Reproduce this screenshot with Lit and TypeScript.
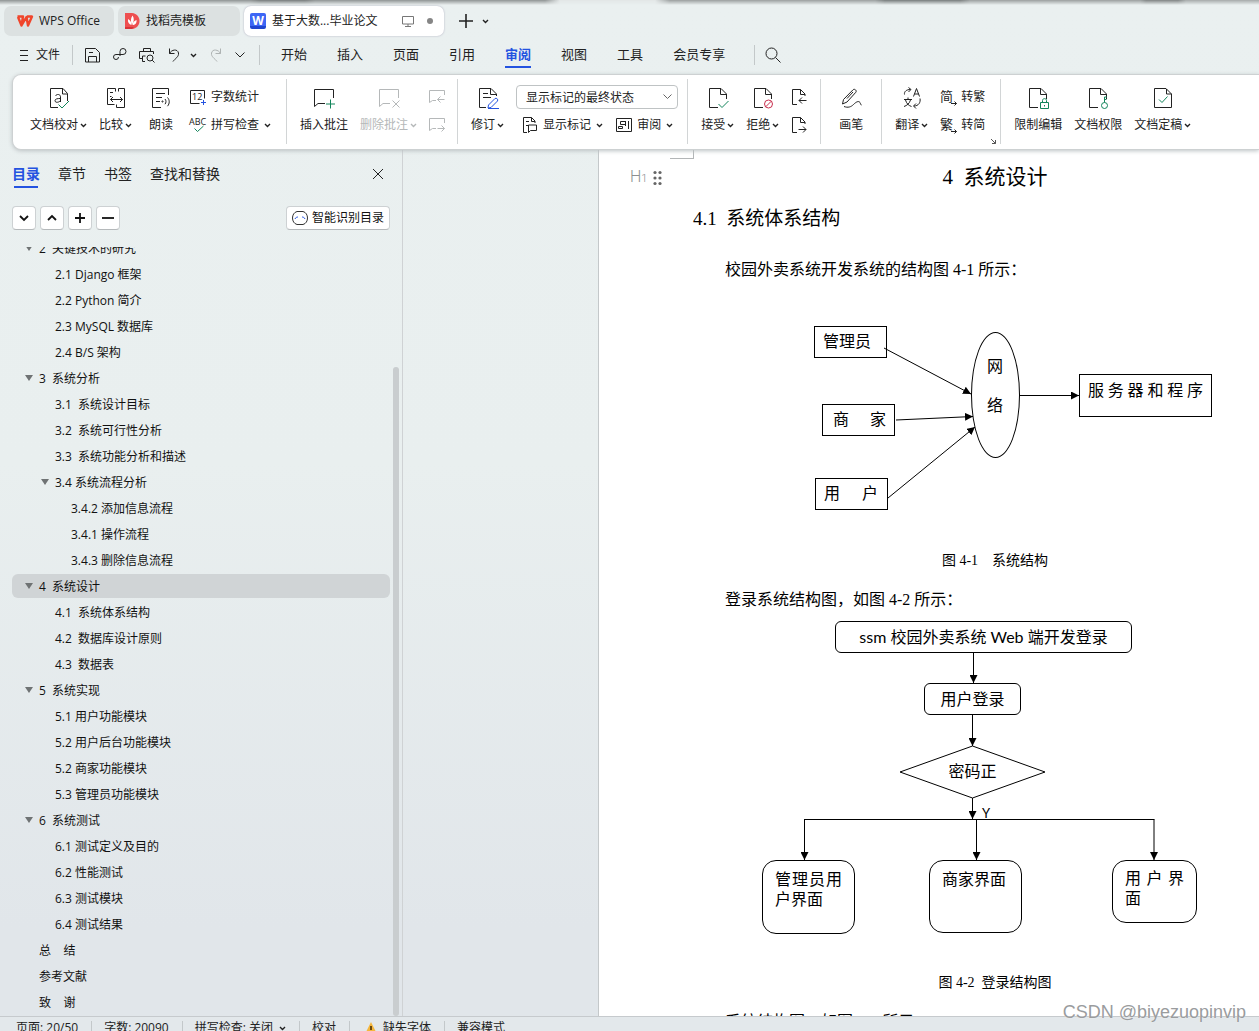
import { LitElement, html, svg, css, nothing } from "lit";
import { customElement, property, state } from "lit/decorators.js";
import { classMap } from "lit/directives/class-map.js";

const GREEN = "#12855b";
const BLUE = "#2453e0";

/* Line icons, drawn in a 24 x 24 box at their real size. */
const docSheet = svg`<path d="M12 21.5H3.5v-19H15l5.5 5.5v5"/><path d="M14.5 2.5v6h6"/>`;
const big: Record<string, unknown> = {
  proof: svg`<path d="M11 21.5H3.5v-19H16l4.500 5V15"/><path d="M15.500 2.500v5.500h5"/><path d="M8.500 10c1-2.300 5-2 5 .8V16M13.500 12.500c-3 0-5.500.3-5.500 2.200 0 2.300 4 2 5.500-.2"/><path stroke=${GREEN} d="M11.500 18.500l3.500 3.500 7-7"/>`,
  compare: svg`<path d="M10.500 18.500h-7v-16h8v3M14.500 5.500v-3h6v16M20.500 18v3.500h-8v-3"/><path d="M6 6.500h3M6 10.500h1.500M6.500 13.500h12M9 11l-2.500 2.500L9 16M16 11l2.500 2.500L16 16"/>`,
  read: svg`<path d="M12 21.500H3.500v-19h16V9"/><path d="M7 7.500h9M7 11.500h6M7 15.500h4"/><circle cx="13.500" cy="15.500" r=".6"/><path d="M16 13c1.300 1.600 1.300 3.600 0 5.200M18.500 11.500c2.300 2.500 2.300 6 0 8.700"/>`,
  addNote: svg`<path d="M21.500 12V3.500h-19v17l3.500-3h7"/><path stroke=${GREEN} d="M18.500 13.500v9M14 18h9"/>`,
  delNote: svg`<path d="M21.500 12V3.500h-19v17l3.500-3h7"/><path d="M15.500 14.500l7 7M22.500 14.500l-7 7"/>`,
  revise: svg`<path d="M10 21.500H3.500v-19H15l5.500 5.500v2"/><path d="M14.500 2.500v6h6M7 7.500h5M7 11.500h8"/><path stroke=${BLUE} d="M12.500 19l6.500-6.500c1.500-1 3.500 1 2.500 2.500L15 21.500l-3 .5zM12 22.500h11"/>`,
  accept: svg`${docSheet}<path stroke=${GREEN} d="M12.500 18l3.500 3.500 6.500-6.500"/>`,
  reject: svg`${docSheet}<circle stroke="#c9304f" cx="17.500" cy="18" r="4"/><path stroke="#c9304f" d="M14.700 20.800l5.600-5.600"/>`,
  pen: svg`<path d="M3.500 18l1-4.500L14 3.800c1.500-1.500 4.200.8 2.800 2.500L8 16zM14 6l-6 6.500"/><path d="M5 20.500c4 1.500 7 .5 9.500-2s5-4 6.500-2c.6 1 .5 2.500 1.500 2.500"/>`,
  translate: svg`<path d="M4.500 8.500c-.5-3 2-5 6-5M8.500 1.500l2.500 2-2.500 2.500M20 12.500c.8 4-1.500 7.500-6 7.500M16 17.500l-2.500 2.500 2.500 2.500"/><path d="M13.500 10.500l3-8 3 8M14.500 8h4"/><path d="M4 13.500h8M8 11.500v2M5.500 14c1 3.500 3 5.500 6 6.500M10.500 14c-1 3.500-3.500 5.500-6.500 6.500"/>`,
  limit: svg`${docSheet}<path stroke=${GREEN} d="M14.500 16.500h8v6h-8zM16.500 16.500v-2c0-2.500 4-2.500 4 0v2M18.500 19v1.500"/>`,
  rights: svg`${docSheet}<circle stroke=${GREEN} cx="18.500" cy="19.500" r="3"/><path stroke=${GREEN} d="M18.500 16.500v-5.500h2.500M18.500 13.500h2"/>`,
  final: svg`<path d="M3.500 2.500H15l5.500 5.500v13.500h-17z"/><path d="M15.500 3v5h5"/><path stroke=${GREEN} d="M8 13.500l3 3 5.500-6"/>`,
};

/* Small icons, drawn in a 16 x 16 box. */
const small: Record<string, unknown> = {
  count: svg`<path d="M9.500 14.500h-9v-13h14v8"/><text x="2" y="11" font-size="9" fill="#222" stroke="none">12</text><path stroke=${BLUE} d="M13.500 11v5M11 13.500h5"/>`,
  spell: svg`<text x="-1" y="8" font-size="9" fill="#222" stroke="none">ABC</text><path stroke=${GREEN} d="M4.500 11.500l3 3 6-5.500"/>`,
  prevNote: svg`<path d="M15.500 6V1.500H.5v12l3-2H7"/><path d="M15.500 10.500H8.500M11.500 7.500l-3 3 3 3"/>`,
  nextNote: svg`<path d="M15.500 6V1.500H.5v12l3-2H7"/><path d="M8.500 11.500h7M12.500 8.500l3 3-3 3"/>`,
  marks: svg`<path d="M5 15.500H1.500V.5h8l3.500 3.500v2M9.500.5v4h3.500M4 4.500h3M4 8.500h2"/><path d="M6.500 15.500v-7.500h8v5.500H8.500z"/>`,
  pane: svg`<path d="M.5 1.500h15v13H.5zM12.500 4v8M9.500 4.500h-5v3h5zM9.500 4v5M2.500 9.500h4v2h-4z"/>`,
  prevRev: svg`<path d="M6 15.500H1.500V.5h8l4.500 4.500v2M9.500.5v5H14"/><path d="M15.500 11.500H8M11 8.500l-3 3 3 3"/>`,
  nextRev: svg`<path d="M6 15.500H1.500V.5h8l4.500 4.500v2M9.500.5v5H14"/><path d="M7.500 12.500H15M12 9.500l3 3-3 3"/>`,
  toTrad: svg`<text x="0" y="12" font-size="13" fill="#222" stroke="none">简</text><path d="M11 14.500h5.500M14.500 12.500l2 2-2 2"/>`,
  toSimp: svg`<text x="0" y="12" font-size="13" fill="#222" stroke="none">繁</text><path d="M11 14.500h5.500M14.500 12.500l2 2-2 2"/>`,
  save: svg`<path d="M.5 1.500h10l4 4v9.500H.5zM3.500 15V9.500h8V15M4 5.500h4"/>`,
  share: svg`<path d="M8 9V4.500a3 3 0 1 1 3 3H4a2.500 2.500 0 1 0 2.500 2.500"/>`,
  print: svg`<path d="M4.500 4.500v-3h7v3M3 11.500H.5v-7h14V7M6 14.500H3.500V9h3"/><circle cx="11" cy="11" r="3"/><path d="M13.200 13.200l2.300 2.300"/>`,
  undo: svg`<path d="M3.500 1.500v5h5M3.500 6.500c2-4 8-5 9-.5.500 4-3.500 5.500-5.500 8.500"/>`,
  redo: svg`<path d="M12.500 1.500v5h-5M12.500 6.500c-2-4-8-5-9-.5-.500 4 3.500 5.500 5.500 8.500"/>`,
  search: svg`<circle cx="6.500" cy="6.500" r="5.500"/><path d="M10.500 10.500l5 5"/>`,
  screen: svg`<path d="M2.500 3.500h11v7.500h-11zM8 11v2.500M5 13.500h6"/>`,
  plus: svg`<path stroke-width="1.600" d="M8 1v14M1 8h14"/>`,
  menu: svg`<path d="M4 3.500h8M4 8.500h8M4 13.500h8"/>`,
};

const bigIcon = (n: string) => html`<svg class="i24" viewBox="0 0 24 24" aria-hidden="true">${big[n]}</svg>`;
const icon = (n: string) => html`<svg class="i16" viewBox="0 0 16 16" aria-hidden="true">${small[n]}</svg>`;
const chev = html`<svg class="chev" viewBox="0 0 7 5" aria-hidden="true"><path d="M1 1l2.500 2.500L6 1"/></svg>`;

const shared = css`
  * { box-sizing: border-box; }
  button, select {
    font: inherit;
    color: inherit;
    background: none;
    border: 0;
    margin: 0;
    padding: 0;
    white-space: nowrap;
  }
  svg { flex: none; display: block; overflow: visible; fill: none; stroke: currentColor; }
  .i24 { width: 24px; height: 24px; }
  .i16 { width: 16px; height: 16px; }
  .chev { width: 7px; height: 5px; stroke-width: 1.4; }
`;

@customElement("title-tabs")
class TitleTabs extends LitElement {
  static styles = [shared, css`
    :host { display: block; position: relative; }
    .edge {
      position: absolute;
      inset: 0 0 auto 0;
      height: 5px;
      background: linear-gradient(90deg, #8f9393 0 250px, #777b7b 260px 305px, #8f9393 315px 545px, #e2e6e6 560px 655px, #9b9f9f 670px 875px, #777b7b 885px 960px, #9b9f9f 970px 1140px, #7f8383 1146px 1178px, #a6aaaa 1186px);
      -webkit-mask-image: linear-gradient(#000, transparent);
      mask-image: linear-gradient(#000, transparent);
    }
    .tabs { display: flex; align-items: center; gap: 4px; padding: 6px 4px 0; }
    .tab {
      display: flex;
      align-items: center;
      gap: 6px;
      height: 30px;
      padding: 0 14px 0 13px;
      border-radius: 7px;
      background: #dce1e1;
    }
    .second { padding: 0 34px 0 6px; }
    .active { background: #fff; padding: 0 6px; box-shadow: 0 0 2px #aab; }
    .badge {
      width: 16px;
      height: 16px;
      line-height: 15px;
      border-radius: 2px;
      background: linear-gradient(#3d66f5 13px, #1f45cf 13px);
      color: #fff;
      font-weight: 700;
      text-align: center;
    }
    .state { display: flex; align-items: center; gap: 11px; color: #777; padding-left: 17px; }
    .dot { width: 6px; height: 6px; border-radius: 50%; background: #858585; margin-right: 5px; }
    .new { display: flex; align-items: center; gap: 8px; padding-left: 10px; }
  `];
  render() {
    return html`
      <div class="edge"></div>
      <div class="tabs">
        <button class="tab">
          <svg class="i16" viewBox="0 0 16 16" aria-hidden="true">
            <path stroke="#f0452b" stroke-width="2.400" stroke-linejoin="round" d="M.5 3.500H6L4.500 12.500 1 4M4.500 12.500L9.500 4l1.500 8.500 4-9h-5"/>
          </svg>
          <span>WPS Office</span>
        </button>
        <button class="tab second">
          <svg class="i16" viewBox="0 0 16 16" aria-hidden="true">
            <path stroke="none" fill="#ee4f50" d="M1 0h7c10 1 10 15 0 16H1z"/>
            <path stroke="none" fill="#d93338" d="M1 14h9l-2 2H1z"/>
            <path stroke="none" fill="#fff" d="M8.500 2.500c2 3 1.500 6-.5 9-1.500-3-1.500-6 .5-9zM4 6c2 1 3.500 3 3.500 6C5 11.500 3.500 9 4 6zM12.500 7c.5 3-1.500 5-4 5 0-2.500 2-4.500 4-5z"/>
          </svg>
          <span>找稻壳模板</span>
        </button>
        <button class="tab active">
          <span class="badge">W</span>
          <span>基于大数...毕业论文</span>
          <span class="state">${icon("screen")}<i class="dot"></i></span>
        </button>
        <button class="new" aria-label="新建">${icon("plus")}${chev}</button>
      </div>`;
  }
}

@customElement("menu-row")
class MenuRow extends LitElement {
  @state() active = "审阅";
  static styles = [shared, css`
    :host { display: flex; align-items: center; height: 38px; padding: 0 16px; font-size: 13px; }
    .file { display: flex; align-items: center; gap: 4px; padding-right: 12px; font-size: 12px; line-height: 18px; }
    .rule { width: 1px; height: 20px; background: #c3c8c9; flex: none; }
    .quick { display: flex; align-items: center; gap: 11px; padding: 0 14px 0 12px; }
    .quick button { display: flex; align-items: center; gap: 8px; }
    .quick .off { color: #aeb3b3; }
    .wide { width: 10px; height: 6px; stroke-width: 1; }
    nav { display: flex; gap: 30px; padding: 0 29px 0 21px; }
    .item { height: 26px; line-height: 24px; border-bottom: 2px solid transparent; }
    .on { color: #2453e0; font-weight: 700; border-color: #2453e0; }
    .find { padding-left: 10px; }
  `];
  render() {
    return html`
      <button class="file">${icon("menu")}<span>文件</span></button>
      <span class="rule"></span>
      <div class="quick">
        <button aria-label="保存">${icon("save")}</button>
        <button aria-label="输出">${icon("share")}</button>
        <button aria-label="打印预览">${icon("print")}</button>
        <button aria-label="撤销">${icon("undo")}${chev}</button>
        <button class="off" aria-label="恢复">${icon("redo")}</button>
        <button aria-label="更多"><svg class="wide" viewBox="0 0 10 6"><path d="M.5.5L5 5 9.500.5"/></svg></button>
      </div>
      <span class="rule"></span>
      <nav>
        ${["开始", "插入", "页面", "引用", "审阅", "视图", "工具", "会员专享"].map((t) => html`
          <button class=${classMap({ item: true, on: t === this.active })} @click=${() => (this.active = t)}>${t}</button>`)}
      </nav>
      <span class="rule"></span>
      <button class="find" aria-label="搜索">${icon("search")}</button>`;
  }
}

@customElement("review-ribbon")
class ReviewRibbon extends LitElement {
  static styles = [shared, css`
    :host {
      display: flex;
      height: 76px;
      margin-left: 12px;
      padding: 4px 0 5px;
      border: 1px solid #cdd1d2;
      border-right: 0;
      border-radius: 9px 0 0 9px;
      background: #fff;
      position: relative;
      z-index: 1;
      box-shadow: 0 1px 4px #bcc2c4;
      color: #222;
    }
    .group { display: flex; gap: 12px; padding: 7px 13px 0; border-right: 1px solid #d2d5d6; flex: none; position: relative; }
    .group:last-child { border: 0; }
    .first { padding: 7px 15px 0 17px; }
    .notes { padding-right: 12px; }
    .track { padding-right: 8px; }
    .convert { padding-right: 15px; }
    .big { display: flex; flex-direction: column; align-items: center; gap: 6px; height: 48px; line-height: 18px; }
    .two { padding: 0 5px; }
    .label { display: flex; align-items: center; gap: 2px; }
    .col { display: flex; flex-direction: column; gap: 6px; }
    .row { display: flex; align-items: center; gap: 5px; height: 22px; line-height: 18px; }
    .pair { display: flex; gap: 13px; padding: 0 6px; }
    .off { color: #b5b8b9; }
    .pick { display: flex; align-items: center; position: relative; height: 22px; }
    .pick select {
      appearance: none;
      width: 162px;
      height: 24px;
      padding: 1px 24px 0 9px;
      border: 1px solid #bfc3c4;
      border-radius: 4px;
      background: #fff;
    }
    .pick svg { position: absolute; right: 7px; width: 9px; height: 6px; stroke: #666; pointer-events: none; }
    .corner { position: absolute; right: 4px; bottom: 0; width: 5px; height: 5px; stroke: #555; }
  `];
  private big(i: string, t: string, more = false, off = false) {
    return html`<button class=${classMap({ big: true, off, two: t.length === 2 && !more })} ?disabled=${off}>
      ${bigIcon(i)}<span class="label">${t}${more ? chev : nothing}</span></button>`;
  }
  private row(i: string, t: string, more = false) {
    return html`<button class="row">${icon(i)}<span>${t}</span>${more ? chev : nothing}</button>`;
  }
  render() {
    return html`
      <div class="group first">
        ${this.big("proof", "文档校对", true)}${this.big("compare", "比较", true)}${this.big("read", "朗读")}
        <div class="col">${this.row("count", "字数统计")}${this.row("spell", "拼写检查", true)}</div>
      </div>
      <div class="group notes">
        ${this.big("addNote", "插入批注")}${this.big("delNote", "删除批注", true, true)}
        <div class="col off">
          <button class="row" disabled aria-label="上一条批注">${icon("prevNote")}</button>
          <button class="row" disabled aria-label="下一条批注">${icon("nextNote")}</button>
        </div>
      </div>
      <div class="group track">
        ${this.big("revise", "修订", true)}
        <div class="col">
          <div class="pick">
            <select aria-label="显示状态"><option>显示标记的最终状态</option></select>
            <svg viewBox="0 0 9 6"><path d="M.5.5l4 4 4-4"/></svg>
          </div>
          <div class="pair">${this.row("marks", "显示标记", true)}${this.row("pane", "审阅", true)}</div>
        </div>
      </div>
      <div class="group">
        ${this.big("accept", "接受", true)}${this.big("reject", "拒绝", true)}
        <div class="col">
          <button class="row" aria-label="上一处修订">${icon("prevRev")}</button>
          <button class="row" aria-label="下一处修订">${icon("nextRev")}</button>
        </div>
      </div>
      <div class="group">${this.big("pen", "画笔")}</div>
      <div class="group convert">
        ${this.big("translate", "翻译", true)}
        <div class="col">${this.row("toTrad", "转繁")}${this.row("toSimp", "转简")}</div>
        <svg class="corner" viewBox="0 0 5 5"><path d="M0 0l4.500 4.500M4.500 1v3.500H1"/></svg>
      </div>
      <div class="group">
        ${this.big("limit", "限制编辑")}${this.big("rights", "文档权限")}${this.big("final", "文档定稿", true)}
      </div>`;
  }
}

interface Entry { level: number; text: string; open?: boolean; }

const OUTLINE: Entry[] = [
  { level: 1, text: "2  关键技术的研究", open: true },
  { level: 2, text: "2.1 Django 框架" },
  { level: 2, text: "2.2 Python 简介" },
  { level: 2, text: "2.3 MySQL 数据库" },
  { level: 2, text: "2.4 B/S 架构" },
  { level: 1, text: "3  系统分析", open: true },
  { level: 2, text: "3.1  系统设计目标" },
  { level: 2, text: "3.2  系统可行性分析" },
  { level: 2, text: "3.3  系统功能分析和描述" },
  { level: 2, text: "3.4 系统流程分析", open: true },
  { level: 3, text: "3.4.2 添加信息流程" },
  { level: 3, text: "3.4.1 操作流程" },
  { level: 3, text: "3.4.3 删除信息流程" },
  { level: 1, text: "4  系统设计", open: true },
  { level: 2, text: "4.1  系统体系结构" },
  { level: 2, text: "4.2  数据库设计原则" },
  { level: 2, text: "4.3  数据表" },
  { level: 1, text: "5  系统实现", open: true },
  { level: 2, text: "5.1 用户功能模块" },
  { level: 2, text: "5.2 用户后台功能模块" },
  { level: 2, text: "5.2 商家功能模块" },
  { level: 2, text: "5.3 管理员功能模块" },
  { level: 1, text: "6  系统测试", open: true },
  { level: 2, text: "6.1 测试定义及目的" },
  { level: 2, text: "6.2 性能测试" },
  { level: 2, text: "6.3 测试模块" },
  { level: 2, text: "6.4 测试结果" },
  { level: 1, text: "总    结" },
  { level: 1, text: "参考文献" },
  { level: 1, text: "致    谢" },
];

@customElement("outline-pane")
class OutlinePane extends LitElement {
  @state() current = "4  系统设计";
  static styles = [shared, css`
    :host { display: flex; flex-direction: column; width: 403px; flex: none; border-right: 1px solid #cfd2d4; position: relative; color: #111; }
    .tabs { display: flex; align-items: flex-start; gap: 18px; padding: 13px 19px 0 12px; font-size: 14px; color: #222; }
    .tab { height: 25px; line-height: 20px; padding-bottom: 3px; position: relative; }
    .on { color: #2453e0; font-weight: 700; }
    .on::after { content: ""; position: absolute; left: 2px; right: 2px; bottom: 0; height: 2px; background: #2453e0; }
    .close { margin-left: auto; height: 22px; }
    .close svg { width: 10px; height: 10px; }
    .tools { display: flex; gap: 4px; padding: 18px 12px 17px; }
    .tool {
      display: flex;
      align-items: center;
      justify-content: center;
      gap: 4px;
      min-width: 24px;
      height: 24px;
      border: 1px solid #cdd1d3;
      border-bottom-color: #b5b9bb;
      border-radius: 4px;
      background: #fff;
    }
    .tool svg { width: 12px; height: 12px; stroke-width: 1.8; }
    .smart { margin-left: auto; padding: 0 5px; }
    .smart svg { width: 16px; height: 16px; stroke-width: 1; }
    .list { flex: 1; min-height: 0; overflow: hidden; padding: 0 12px; }
    ul { list-style: none; margin: -12px 0 0; padding: 0; }
    li { padding: 1px 0; }
    .entry { display: flex; align-items: center; width: 100%; height: 24px; padding-top: 2px; border-radius: 6px; white-space: pre; text-align: left; }
    .l2 { padding-left: 16px; }
    .l3 { padding-left: 32px; }
    .sel { background: #d0d4d6; }
    .twist { width: 27px; padding: 0 0 2px 13px; }
    .twist svg { width: 8px; height: 6px; stroke: none; fill: #6f7374; }
    .bar { position: absolute; right: 3px; top: 217px; bottom: 0; width: 6px; border-radius: 3px; background: #c9cdcf; }
  `];
  render() {
    return html`
      <div class="tabs">
        <button class="tab on">目录</button>
        <button class="tab">章节</button>
        <button class="tab">书签</button>
        <button class="tab">查找和替换</button>
        <button class="close" aria-label="关闭"><svg viewBox="0 0 10 10"><path d="M0 0l10 10M10 0L0 10"/></svg></button>
      </div>
      <div class="tools">
        <button class="tool" aria-label="展开"><svg viewBox="0 0 12 12"><path d="M2 4l4 4 4-4"/></svg></button>
        <button class="tool" aria-label="收起"><svg viewBox="0 0 12 12"><path d="M2 8l4-4 4 4"/></svg></button>
        <button class="tool" aria-label="增加"><svg viewBox="0 0 12 12"><path d="M6 1v10M1 6h10"/></svg></button>
        <button class="tool" aria-label="减少"><svg viewBox="0 0 12 12"><path d="M0 6h12"/></svg></button>
        <button class="tool smart">
          <svg viewBox="0 0 16 16">
            <path stroke="#333" d="M5 1.500C-1 3-1 13 5 14.500h6c6-1.500 6-11.500 0-13z"/>
            <path stroke=${BLUE} d="M3 9c.5-1.500 2-2 3-2M13 9c-.5-1.500-2-2-3-2"/>
          </svg>
          <span>智能识别目录</span>
        </button>
      </div>
      <div class="list">
        <ul>
          ${OUTLINE.map((e) => html`<li>
            <button class=${classMap({ entry: true, l2: e.level === 2, l3: e.level === 3, sel: e.text === this.current })}
              @click=${() => (this.current = e.text)}><span class="twist">${e.open ? html`<svg viewBox="0 0 8 6"><path d="M0 0h8L4 6z"/></svg>` : nothing}</span><span>${e.text}</span></button></li>`)}
        </ul>
      </div>
      <div class="bar"></div>`;
  }
}

const arrowHead = (id: string) => svg`<defs><marker id=${id} viewBox="0 0 8 8" refX="8" refY="4" markerWidth="8" markerHeight="8" markerUnits="userSpaceOnUse" orient="auto"><path d="M0 0l8 4-8 4z" fill="#000" stroke="none"/></marker></defs>`;

@customElement("doc-page")
class DocPage extends LitElement {
  static styles = [shared, css`
    :host {
      display: block;
      position: relative;
      width: 793px;
      flex: none;
      padding: 12px 94px 0;
      border-left: 1px solid #c4c8ca;
      background: #fff;
      color: #000;
      font: 16px/24px "Liberation Serif", "Noto Sans CJK SC", serif;
    }
    h1, h2, p, figure, figcaption { margin: 0; font-weight: 400; }
    h1, h2, p, figcaption { white-space: pre; }
    h1 { font-size: 21px; line-height: 30px; text-align: center; }
    h2 { font-size: 19px; line-height: 28px; margin-top: 13px; }
    p { text-indent: 32px; }
    .p1 { margin-top: 25px; }
    .p2 { margin-top: 17px; }
    figcaption { font-size: 14px; line-height: 20px; text-align: center; }
    .canvas { position: relative; }
    .c1 { height: 230px; margin: 28px 0 11px; }
    .c2 { height: 320px; margin: 8px 0 33px; }
    .wires { position: absolute; left: 0; top: 0; width: 604px; height: 100%; stroke: #000; }
    .node { position: absolute; border: 1px solid #000; line-height: 30px; }
    .spread { text-align: justify; text-align-last: justify; }
    .round { border-radius: 6px; text-align: center; }
    .card { border-radius: 14px; line-height: 20px; text-align: justify; padding: 9px 12px; }
    .n1 { left: 121px; top: 16px; width: 73px; height: 32px; padding: 0 8px; }
    .n2 { left: 129px; top: 94px; width: 73px; height: 32px; padding: 0 8px 0 10px; }
    .n3 { left: 122px; top: 168px; width: 73px; height: 32px; padding: 0 9px 0 8px; }
    .n4 { left: 386px; top: 64px; width: 133px; height: 43px; padding: 0 8px; line-height: 32px; }
    .n5 { left: 278px; top: 22px; width: 49px; height: 126px; border-radius: 50%; padding: 14px 16px 0 15px; line-height: 39px; }
    .n6 { left: 142px; top: 1px; width: 297px; height: 32px; font-family: Lato, "Noto Sans CJK SC", sans-serif; }
    .n7 { left: 231px; top: 63px; width: 97px; height: 32px; line-height: 32px; }
    .n8 { left: 207px; top: 137px; width: 145px; border: 0; text-align: center; }
    .n9 { left: 69px; top: 240px; width: 93px; height: 74px; }
    .n10 { left: 236px; top: 240px; width: 93px; height: 73px; }
    .n11 { left: 419px; top: 240px; width: 85px; height: 63px; padding: 8px 12px; }
    .yes { left: 289px; top: 183px; border: 0; font: 400 13px/20px Lato, sans-serif; }
    .crop { position: absolute; left: 71px; top: 0; width: 24px; height: 9px; border: solid #b3b6b7; border-width: 0 1px 1px 0; }
    .handle { position: absolute; left: 31px; top: 15px; display: flex; align-items: center; gap: 6px; color: #8c8f90; font: 300 16px/24px Roboto, "Open Sans", sans-serif; }
    .handle small { font-size: 11px; }
    .handle svg { width: 9px; height: 14px; stroke: none; fill: #666; }
  `];
  render() {
    return html`
      <div class="crop"></div>
      <div class="handle"><span>H<small>1</small></span>
        <svg viewBox="0 0 9 14">${[2, 7].map((x) => [1.5, 7, 12.5].map((y) => svg`<circle cx=${x} cy=${y} r="1.600"/>`))}</svg>
      </div>
      <h1>4  系统设计</h1>
      <h2>4.1  系统体系结构</h2>
      <p class="p1">校园外卖系统开发系统的结构图 4-1 所示：</p>
      <figure>
        <div class="canvas c1">
          <svg class="wires">${arrowHead("a1")}
            <path marker-end="url(#a1)" d="M191 38L278 84"/>
            <path marker-end="url(#a1)" d="M203 110L280 106.500"/>
            <path marker-end="url(#a1)" d="M195 188L282 117"/>
            <path marker-end="url(#a1)" d="M327 85.500H386"/>
          </svg>
          <div class="node n1">管理员</div>
          <div class="node n2 spread">商家</div>
          <div class="node n3 spread">用户</div>
          <div class="node n4 spread">服务器和程序</div>
          <div class="node n5">网络</div>
        </div>
        <figcaption>图 4-1　系统结构</figcaption>
      </figure>
      <p class="p2">登录系统结构图，如图 4-2 所示：</p>
      <figure>
        <div class="canvas c2">
          <svg class="wires">${arrowHead("a2")}
            <path marker-end="url(#a2)" d="M280.500 33V63"/>
            <path marker-end="url(#a2)" d="M279.500 95V126"/>
            <path d="M207 152l72.500-26 72.500 26-72.500 26z"/>
            <path marker-end="url(#a2)" d="M279.500 178V199"/>
            <path d="M111 199.500H461.500"/>
            <path marker-end="url(#a2)" d="M111.500 199.500V240"/>
            <path marker-end="url(#a2)" d="M283.500 199.500V240"/>
            <path marker-end="url(#a2)" d="M461 199.500V240"/>
          </svg>
          <div class="node round n6">ssm 校园外卖系统 Web 端开发登录</div>
          <div class="node round n7">用户登录</div>
          <div class="node n8">密码正</div>
          <div class="node yes">Y</div>
          <div class="node card n9">管理员用户界面</div>
          <div class="node card n10">商家界面</div>
          <div class="node card n11">用户界面</div>
        </div>
        <figcaption>图 4-2  登录结构图</figcaption>
      </figure>
      <p class="p2">系统结构图，如图 4-3 所示：</p>`;
  }
}

@customElement("status-bar")
class StatusBar extends LitElement {
  static styles = [shared, css`
    :host { display: flex; height: 15px; overflow: hidden; padding-left: 3px; border-top: 1px solid #c6cacd; background: #e3e8eb; color: #222; line-height: 22px; }
    .cell { display: flex; align-items: center; gap: 6px; height: 22px; padding: 0 13px; position: relative; }
    .cell + .cell::before { content: ""; position: absolute; left: 0; top: 4px; width: 1px; height: 14px; background: #c3c8ca; }
    .warn { padding-left: 16px; }
    .warn svg { width: 12px; height: 12px; stroke: none; }
  `];
  render() {
    return html`
      <button class="cell">页面: 20/50</button>
      <button class="cell">字数: 20090</button>
      <button class="cell">拼写检查: 关闭 ${chev}</button>
      <button class="cell">校对</button>
      <button class="cell warn"><svg viewBox="0 0 12 12"><path fill="#f5b63c" d="M6 0l6 12H0z"/><path fill="#6b4a10" d="M5 4h2v4H5zM5 9h2v2H5z"/></svg>缺失字体</button>
      <button class="cell">兼容模式</button>`;
  }
}

@customElement("app-root")
class AppRoot extends LitElement {
  @property() watermark = "CSDN @biyezuopinvip";
  static styles = [shared, css`
    :host {
      display: flex;
      flex-direction: column;
      height: 100vh;
      overflow: hidden;
      position: relative;
      background: linear-gradient(#eaf0f0, #e9efef 45%, #e1e6ea 90%);
      color: #222;
      font: 12px/16px "Open Sans", "Noto Sans CJK SC", sans-serif;
    }
    main { display: flex; flex: 1; min-height: 0; overflow: hidden; }
    .desk { flex: 1; min-width: 0; display: flex; overflow: hidden; padding-left: 195px; }
    .mark { position: absolute; right: 13px; bottom: 8px; color: #9a9c9e; font: 18px/22px "Liberation Sans", sans-serif; text-shadow: 0 0 1px #fff; }
  `];
  render() {
    return html`
      <title-tabs></title-tabs>
      <menu-row></menu-row>
      <review-ribbon></review-ribbon>
      <main>
        <outline-pane></outline-pane>
        <div class="desk"><doc-page></doc-page></div>
      </main>
      <status-bar></status-bar>
      <div class="mark">${this.watermark}</div>`;
  }
}
